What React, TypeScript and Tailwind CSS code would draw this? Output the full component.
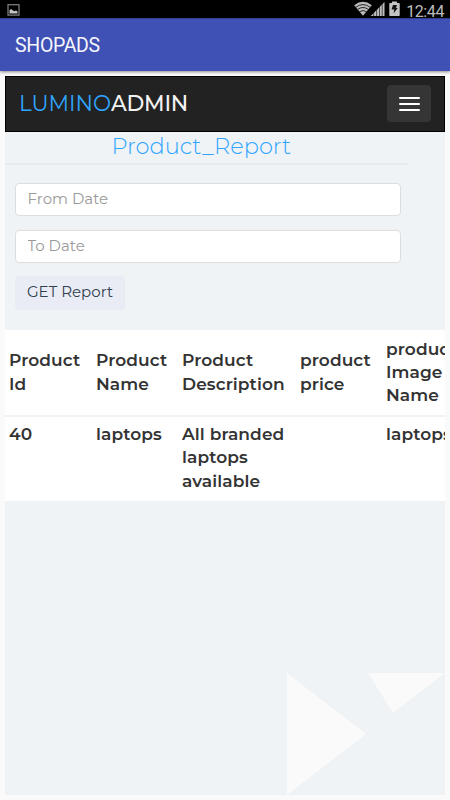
const headers = [
  { lines: ['Product', 'Id'] },
  { lines: ['Product', 'Name'] },
  { lines: ['Product', 'Description'] },
  { lines: ['product', 'price'] },
  { lines: ['product', 'Image', 'Name'] },
];

const rows = [
  [['40'], ['laptops'], ['All branded', 'laptops', 'available'], [], ['laptops']],
];

const StatusBar = () => (
  <div className="flex h-[18px] shrink-0 items-center justify-between bg-black pl-[7px] pr-[6px]">
    <svg width="13" height="12" viewBox="0 0 13 12" className="mt-0.5">
      <rect x="1" y="0.7" width="11" height="10.4" fill="none" stroke="#858585" strokeWidth="1.2" />
      <path d="M2.5 9.5V6.2L4 5l2 1.5 1.2.7L9 6.5l1.5 1v2z" fill="#c4c4c4" />
    </svg>
    <div className="flex items-center">
      <svg width="50" height="18" viewBox="0 0 50 18">
        {/* Wifi */}
        <path d="M.2 5.2Q9 -1.6 17.8 5.2L9 15.8z" fill="#bdbdbd" />
        <path d="M1.8 7.2Q9 2 16.2 7.2M3.6 9.4Q9 5.6 14.4 9.4M5.5 11.7Q9 9.4 12.5 11.7" fill="none" stroke="#000" strokeWidth="0.8" />
        {/* Signal */}
        <path d="M16.7 16L30.5 2v14z" fill="#bdbdbd" />
        <path d="M19.6 16V9M22.6 16V6M25.5 16V4M28.2 16V1" stroke="#000" strokeWidth="0.6" />
        {/* Battery */}
        <path d="M36 3h2V1.5h5V3h2q.7 0 .7.7v11.6q0 .7-.7.7h-9q-.7 0-.7-.7V3.7q0-.7.7-.7z" fill="#c4c4c4" />
        <path d="M39 5h4l-1 3h1.7L39.5 13.5l.8-4H37.500z" fill="#111" />
      </svg>
      <span className="ml-[2px] mt-[5px] font-['Roboto',sans-serif] text-[16px] leading-[18px] tracking-[-0.4px] text-[#bdbdbd]">
        12:44
      </span>
    </div>
  </div>
);

const Navbar = () => (
  <nav className="flex h-14 shrink-0 items-center justify-between border border-black bg-[#222] pl-[13px] pr-[13px]">
    <div className="whitespace-nowrap pb-[3px] text-[21.5px] leading-6 text-[#f2f2f2]">
      <span className="text-[#30a5ff]">LUMINO</span>
      <span className="font-medium tracking-[-0.2px]">ADMIN</span>
    </div>
    <button className="mb-px flex h-[37px] w-[44px] flex-col items-center justify-center gap-[4px] rounded bg-[#353535]">
      <span className="h-[2px] w-[21px] rounded-[1px] bg-white" />
      <span className="h-[2px] w-[21px] rounded-[1px] bg-white" />
      <span className="h-[2px] w-[21px] rounded-[1px] bg-white" />
    </button>
  </nav>
);

const ReportForm = () => (
  <div className="pl-[10px]">
    <input
      placeholder="From Date"
      className="block h-[33px] w-[386px] rounded border border-[#ddd] bg-white px-[11.5px] pb-[2px] text-[15px] placeholder:text-[#999]"
    />
    <input
      placeholder="To Date"
      className="mt-[14px] block h-[33px] w-[386px] rounded border border-[#ddd] bg-white px-[11.5px] pb-[2px] text-[15px] placeholder:text-[#999]"
    />
    <button className="mt-[13px] block h-[34px] w-[110px] whitespace-nowrap rounded bg-[#e9ecf5] pb-[2px] text-[15px] text-[#30404d]">
      GET Report
    </button>
  </div>
);

const ReportTable = () => (
  <table className="mt-[20px] w-[472px] table-fixed border-collapse bg-white text-left text-[17px] font-semibold leading-[23.3px] tracking-[0.1px] text-[#333]">
    <colgroup>
      <col className="w-[87px]" />
      <col className="w-[86px]" />
      <col className="w-[118px]" />
      <col className="w-[86px]" />
      <col className="w-[95px]" />
    </colgroup>
    <thead>
      <tr className="h-[86px]">
        {headers.map((header, index) => (
          <th key={index} className="whitespace-nowrap pl-1 align-middle font-semibold">
            {header.lines.map((line) => (
              <div key={line}>{line}</div>
            ))}
          </th>
        ))}
      </tr>
    </thead>
    <tbody>
      {rows.map((row, index) => (
        <tr key={index} className="h-[85px] border-t-2 border-[#f0f2f4]">
          {row.map((cell, col) => (
            <td key={col} className="whitespace-nowrap pl-1 pt-[6px] align-top">
              {cell.map((line) => (
                <div key={line}>{line}</div>
              ))}
            </td>
          ))}
        </tr>
      ))}
    </tbody>
  </table>
);

export default function App() {
  return (
    <div className="flex h-[800px] w-[450px] flex-col overflow-hidden bg-[#fafafa] font-['Montserrat','Inter',sans-serif]">
      <StatusBar />
      <header className="z-10 flex h-[53px] shrink-0 items-center border-t border-[#303f8f] bg-[#3f51b5] pl-[15px] pt-[2px] font-['Roboto',sans-serif] text-[19.5px] tracking-[-0.3px] text-[#f5f5fc] shadow-[0_1px_3px_rgba(0,0,0,0.45)]">
        SHOPADS
      </header>
      <main className="mx-[5px] mb-[5px] mt-[5px] flex min-h-0 flex-1 flex-col overflow-hidden bg-[#eff3f6]">
        <Navbar />
        <h1 className="mb-[18px] h-[33px] w-[403px] shrink-0 whitespace-nowrap border-b-2 border-[#e9ebed] pl-[106.5px] text-[22.5px] font-light leading-[29px] text-[#30a5ff]">
          Product_Report
        </h1>
        <ReportForm />
        <ReportTable />
        <svg width="158" height="122" viewBox="0 0 158 122" className="ml-auto mt-auto shrink-0" fill="#fafafa">
          <path d="M0 0L79 61L0 122z" />
          <path d="M81 0H158L106 40z" />
        </svg>
      </main>
    </div>
  );
}
